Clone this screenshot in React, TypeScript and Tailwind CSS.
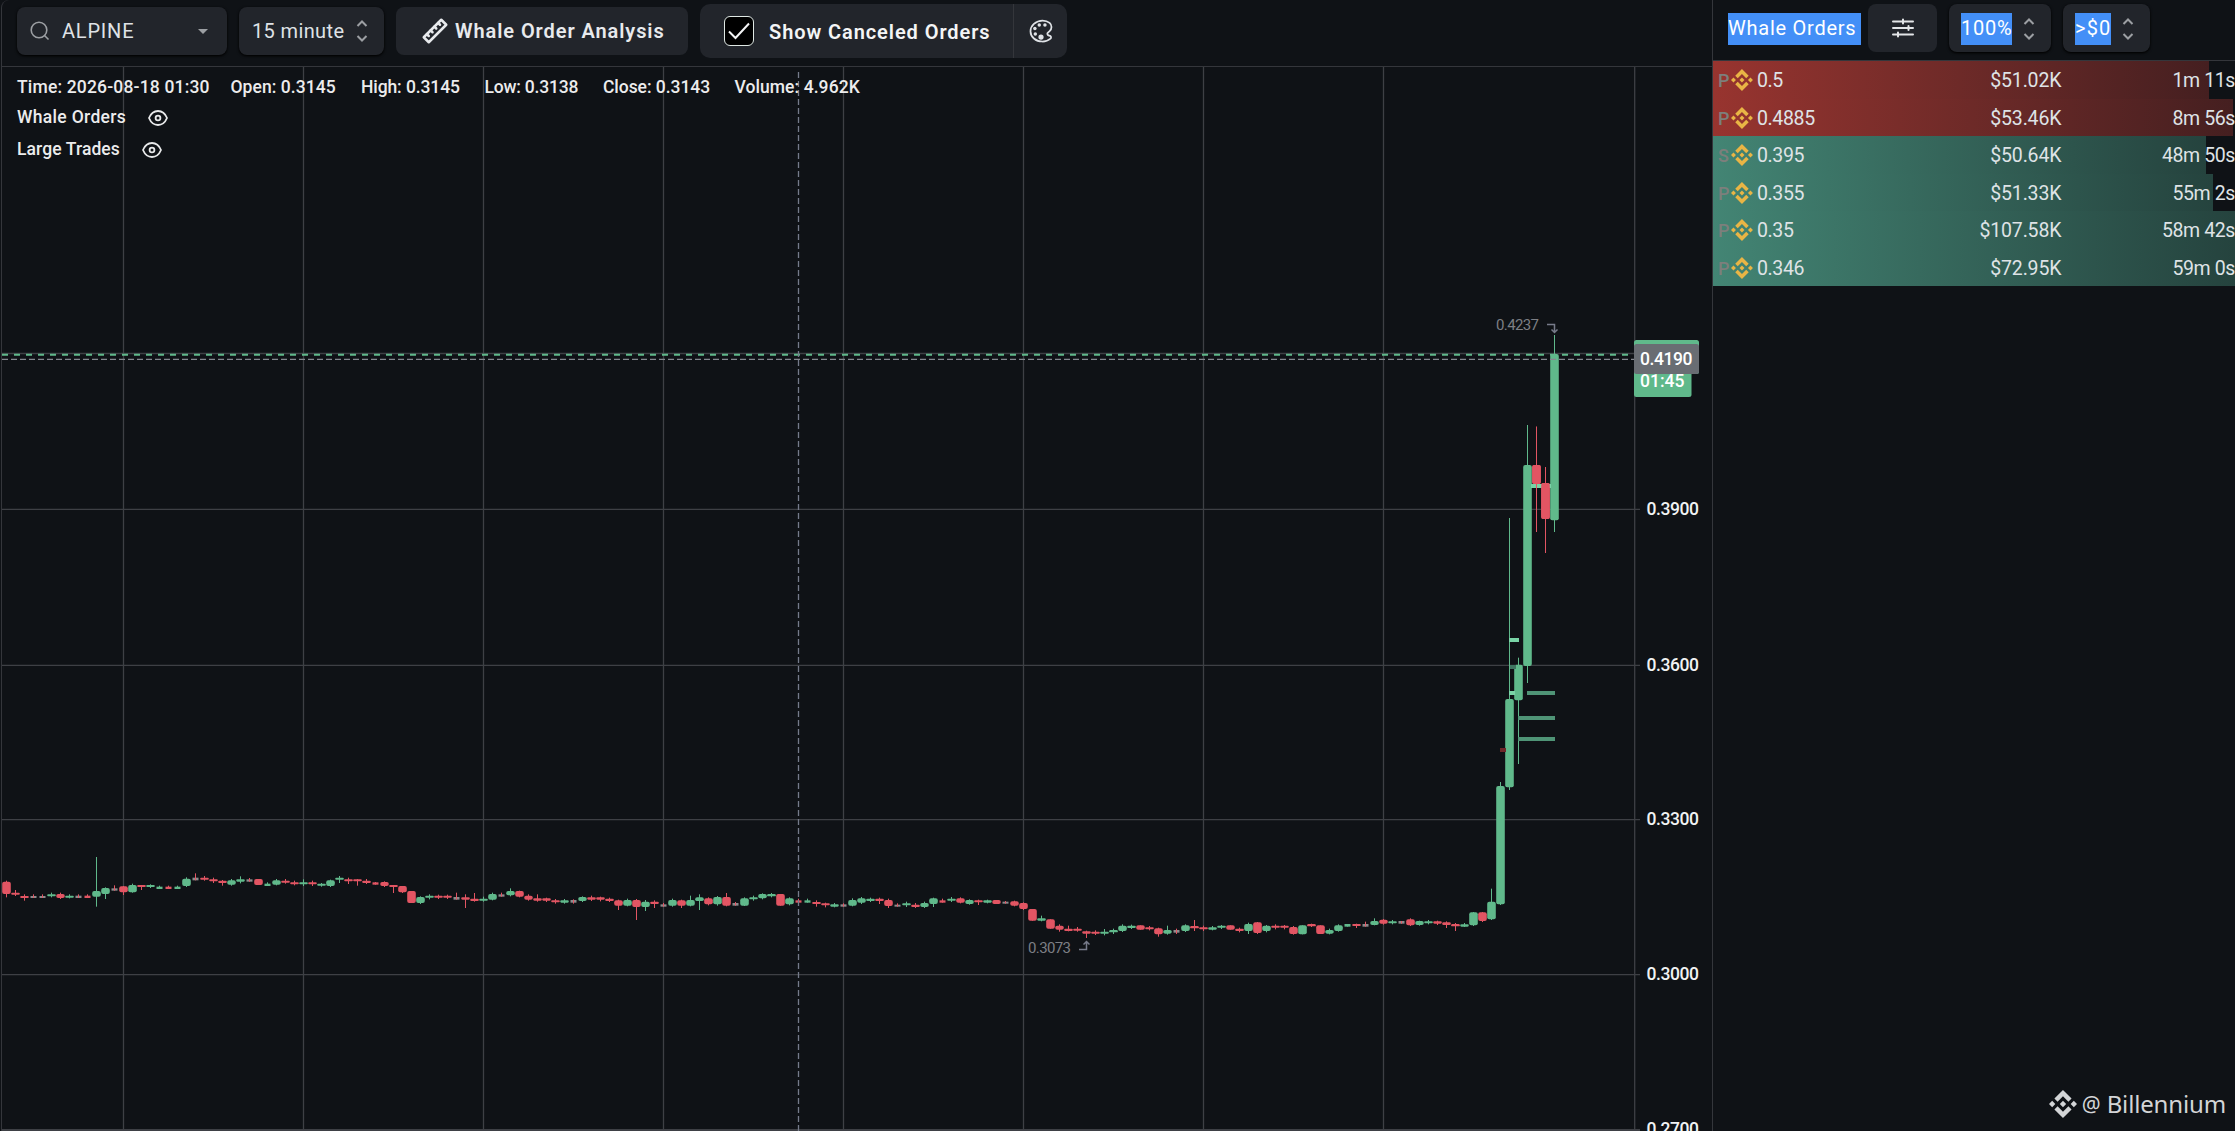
import { SiBinance } from 'react-icons/si'
import { TbRuler2 } from 'react-icons/tb'
import { IoColorPaletteOutline } from 'react-icons/io5'
import clsx from 'clsx'

type Kind = 'g' | 'r' | 'n'
// kind, body top, body bottom, wick high, wick low (thirds of a pixel below BASE_Y)
type Candle = [Kind, number, number, number, number]

const BASE_Y = 840
const STEP = 9
const GREEN = '#60b98b'
const RED = '#e25563'
const NEUTRAL = '#8b8b8d'
const GRID = '#3e4045'

const candles: Candle[] = [
  ['r', 125, 162, 122, 172], ['r', 158, 164, 150, 168], ['r', 168, 174, 163, 182], ['n', 168, 174, 163, 174],
  ['n', 168, 174, 163, 174], ['g', 163, 169, 158, 172], ['r', 162, 174, 158, 177], ['g', 167, 173, 163, 175],
  ['n', 167, 174, 163, 174], ['r', 167, 174, 163, 174], ['g', 153, 170, 51, 200], ['g', 144, 162, 142, 177],
  ['n', 145, 152, 136, 152], ['r', 139, 157, 138, 165], ['g', 135, 157, 131, 158], ['r', 135, 141, 135, 150],
  ['g', 135, 141, 133, 144], ['g', 140, 147, 137, 147], ['r', 140, 147, 137, 147], ['g', 140, 147, 137, 147],
  ['g', 116, 138, 112, 141], ['n', 113, 121, 100, 121], ['r', 113, 119, 108, 122], ['r', 118, 124, 113, 129],
  ['r', 122, 129, 120, 137], ['g', 121, 134, 117, 137], ['g', 118, 125, 109, 130], ['n', 118, 125, 114, 125],
  ['r', 117, 135, 117, 135], ['g', 131, 138, 127, 138], ['g', 121, 134, 117, 136], ['r', 122, 128, 117, 131],
  ['r', 127, 133, 122, 136], ['g', 127, 133, 118, 138], ['r', 127, 133, 122, 138], ['g', 131, 137, 129, 140],
  ['g', 121, 138, 119, 141], ['g', 113, 119, 108, 129], ['r', 118, 124, 113, 132], ['r', 118, 124, 117, 137],
  ['r', 122, 129, 117, 132], ['r', 127, 134, 126, 134], ['r', 126, 138, 124, 141], ['r', 135, 141, 135, 159],
  ['r', 138, 157, 138, 159], ['r', 153, 189, 153, 189], ['g', 171, 189, 169, 192], ['g', 167, 173, 163, 178],
  ['r', 167, 173, 164, 177], ['r', 167, 173, 164, 177], ['n', 171, 179, 158, 179], ['r', 172, 179, 163, 204],
  ['r', 176, 183, 159, 185], ['g', 176, 182, 170, 185], ['g', 162, 179, 158, 181], ['n', 163, 170, 158, 170],
  ['g', 153, 166, 145, 169], ['r', 153, 170, 152, 172], ['r', 167, 179, 163, 182], ['r', 175, 182, 163, 185],
  ['r', 175, 182, 173, 186], ['r', 181, 187, 177, 191], ['g', 181, 188, 177, 191], ['n', 180, 188, 178, 191],
  ['g', 171, 183, 169, 186], ['r', 172, 179, 167, 183], ['r', 172, 179, 170, 184], ['r', 176, 183, 173, 186],
  ['r', 181, 197, 179, 210], ['g', 180, 197, 176, 199], ['r', 180, 201, 177, 240], ['g', 185, 201, 180, 213],
  ['r', 185, 192, 181, 204], ['n', 193, 200, 189, 200], ['g', 180, 197, 176, 200], ['r', 181, 197, 179, 204],
  ['g', 180, 197, 167, 199], ['g', 172, 183, 163, 210], ['r', 175, 193, 172, 196], ['g', 171, 193, 168, 197],
  ['r', 171, 197, 159, 199], ['n', 189, 197, 186, 197], ['g', 175, 197, 172, 198], ['g', 172, 178, 167, 182],
  ['g', 162, 175, 160, 178], ['g', 162, 169, 159, 172], ['r', 162, 197, 162, 197], ['g', 175, 193, 172, 196],
  ['r', 181, 188, 176, 188], ['g', 181, 188, 176, 188], ['r', 186, 192, 181, 200], ['r', 190, 196, 188, 202],
  ['g', 193, 200, 189, 202], ['n', 193, 200, 190, 200], ['g', 180, 197, 175, 199], ['g', 175, 188, 171, 192],
  ['g', 176, 183, 173, 186], ['r', 176, 183, 173, 192], ['r', 180, 198, 176, 204], ['n', 194, 200, 190, 200],
  ['g', 190, 196, 185, 201], ['r', 194, 201, 189, 204], ['g', 189, 201, 185, 204], ['g', 175, 192, 173, 201],
  ['r', 181, 188, 176, 188], ['g', 176, 182, 171, 186], ['r', 175, 188, 172, 190], ['g', 180, 192, 178, 194],
  ['r', 181, 187, 179, 195], ['g', 181, 188, 179, 190], ['r', 180, 192, 180, 192], ['n', 185, 191, 183, 191],
  ['r', 184, 197, 182, 199], ['r', 189, 207, 187, 210], ['r', 207, 242, 207, 242], ['g', 235, 242, 227, 244],
  ['r', 238, 266, 238, 266], ['r', 257, 269, 253, 275], ['r', 266, 273, 257, 274], ['r', 266, 272, 261, 275],
  ['r', 274, 281, 272, 294], ['r', 275, 281, 271, 285], ['g', 275, 281, 267, 286], ['g', 270, 277, 266, 282],
  ['g', 257, 273, 253, 276], ['g', 257, 264, 254, 267], ['r', 256, 269, 256, 269], ['r', 262, 268, 258, 271],
  ['r', 265, 283, 263, 290], ['g', 270, 281, 257, 284], ['n', 270, 278, 266, 282], ['g', 256, 273, 253, 276],
  ['r', 258, 265, 240, 273], ['r', 262, 268, 257, 273], ['g', 262, 269, 258, 271], ['g', 257, 263, 255, 267],
  ['r', 256, 269, 256, 269], ['r', 266, 273, 263, 277], ['g', 252, 273, 248, 282], ['r', 247, 279, 246, 282],
  ['g', 257, 273, 255, 277], ['r', 257, 263, 253, 268], ['r', 257, 263, 255, 268], ['r', 261, 282, 258, 284],
  ['g', 256, 283, 256, 283], ['r', 252, 259, 251, 261], ['r', 256, 282, 256, 282], ['g', 270, 281, 266, 283],
  ['g', 256, 273, 253, 275], ['g', 252, 260, 252, 260], ['r', 252, 258, 251, 264], ['n', 252, 260, 245, 260],
  ['g', 243, 255, 235, 256], ['r', 239, 251, 237, 254], ['g', 244, 250, 240, 253], ['n', 243, 251, 243, 251],
  ['r', 238, 256, 235, 258], ['g', 243, 255, 242, 257], ['g', 244, 250, 240, 253], ['r', 244, 251, 242, 255],
  ['r', 247, 255, 244, 264], ['r', 252, 259, 249, 273], ['g', 253, 260, 249, 261], ['g', 217, 256, 216, 258],
  ['r', 217, 243, 216, 246], ['g', 185, 238, 146, 240], ['g', -162, 193, -174, 195], ['g', -423, -158, -966, -150],
  ['g', -526, -419, -547, -228], ['g', -1125, -522, -1245, -471], ['r', -1125, -1068, -1240, -924],
  ['r', -1071, -963, -1119, -861], ['g', -1458, -959, -1515, -924],
]

// resting and executed whale orders: x, y, width, colour
const levels: [number, number, number, string][] = [
  [1531, 484, 20, '#79d3a6'],
  [1509, 638, 10, '#79d3a6'],
  [1510, 665, 6, '#3f7561'],
  [1509, 691, 6, '#79d3a6'],
  [1527, 691, 28, '#4f9476'],
  [1518, 716, 37, '#4f9476'],
  [1518, 737, 37, '#4f9476'],
  [1500, 748, 6, '#6e2729'],
]

const verticals = [123.5, 303.5, 483.5, 663.5, 843.5, 1023.5, 1203.5, 1383.5]
const horizontals = [353.5, 509.3, 665.3, 819.7, 974.7]
const prices: [string, number][] = [
  ['0.3900', 514.5],
  ['0.3600', 670.5],
  ['0.3300', 825],
  ['0.3000', 980],
  ['0.2700', 1135],
]

const stats = [
  { text: 'Time: 2026-08-18 01:30', cls: 'w-[213.5px] tracking-[0.17px]' },
  { text: 'Open: 0.3145', cls: 'w-[130.5px] tracking-[0.05px]' },
  { text: 'High: 0.3145', cls: 'w-[123.5px] tracking-[-0.1px]' },
  { text: 'Low: 0.3138', cls: 'w-[118.5px] tracking-[-0.2px]' },
  { text: 'Close: 0.3143', cls: 'w-[131.5px] tracking-[-0.05px]' },
  { text: 'Volume: 4.962K', cls: 'tracking-[0.07px]' },
]

const orders = [
  { type: 'P', price: '0.5', size: '$51.02K', age: '1m 11s', side: 'sell', bar: 'w-[496px]' },
  { type: 'P', price: '0.4885', size: '$53.46K', age: '8m 56s', side: 'sell', bar: 'w-[520px]' },
  { type: 'S', price: '0.395', size: '$50.64K', age: '48m 50s', side: 'buy', bar: 'w-[493px]' },
  { type: 'P', price: '0.355', size: '$51.33K', age: '55m 2s', side: 'buy', bar: 'w-[500px]' },
  { type: 'P', price: '0.35', size: '$107.58K', age: '58m 42s', side: 'buy', bar: 'w-full' },
  { type: 'P', price: '0.346', size: '$72.95K', age: '59m 0s', side: 'buy', bar: 'w-full' },
]

function Updown() {
  return (
    <svg width="12" height="22" viewBox="0 0 12 22" fill="none" stroke="#9c9fa3" strokeWidth="2">
      <path d="M1.5 6 6 1.5 10.5 6M1.5 16 6 20.5 10.5 16" />
    </svg>
  )
}

function EyeIcon() {
  return (
    <svg width="20" height="16" viewBox="0 0 20 16" fill="none" stroke="#e8e9ea" strokeWidth="1.8">
      <path d="M1 8C3 3.2 6.3 1 10 1s7 2.2 9 7c-2 4.8-5.3 7-9 7S3 12.8 1 8Z" strokeLinejoin="round" />
      <circle cx="10" cy="8" r="2.4" />
    </svg>
  )
}

function CandleShape({ candle, index }: { candle: Candle; index: number }) {
  const [kind, top, bottom, high, low] = candle
  const x = 6.5 + index * STEP
  const y = BASE_Y + top / 3
  const h = (bottom - top) / 3
  const color = kind === 'g' ? GREEN : kind === 'r' ? RED : NEUTRAL
  const doji = kind === 'n' || (h < 3 && bottom === low)
  return (
    <g>
      <rect x={x - (doji ? 3 : 4.3)} y={y} width={doji ? 6 : 8.6} height={h} rx={doji ? 0 : Math.min(2, h / 2)} fill={color} />
      <rect x={x - 0.5} y={BASE_Y + high / 3} width={1} height={(low - high) / 3} fill={kind === 'n' ? RED : color} />
    </g>
  )
}

function Chart() {
  return (
    <svg className="block" width="1710" height="1064" viewBox="2 67 1710 1064" fontFamily="Roboto, sans-serif">
      <g stroke={GRID} strokeWidth="1.3">
        {verticals.map((x) => <path key={x} d={`M${x} 67V1129`} />)}
        {horizontals.map((y) => <path key={y} d={`M2 ${y}H1640`} />)}
        <path d="M1634.7 67V1131" />
        <path d="M2 1130H1640" strokeWidth="2" />
      </g>
      {candles.map((c, i) => <CandleShape key={i} candle={c} index={i} />)}
      {levels.map(([x, y, w, fill]) => <rect key={`${x}-${y}`} x={x} y={y} width={w} height="4" fill={fill} />)}
      {/* the two pullback candles sit over the 0.395 level */}
      <CandleShape candle={candles[170]} index={170} />
      <CandleShape candle={candles[171]} index={171} />

      <path d="M2 354.8H1634" stroke={GREEN} strokeWidth="2" strokeDasharray="6 6" />
      <path d="M2 359.4H1634" stroke="#85888f" strokeWidth="1.3" strokeDasharray="6 3" />
      <path d="M798.5 72V1131" stroke="#757b8b" strokeWidth="1.3" strokeDasharray="6 3" />

      {/* high and low of the visible range */}
      <g fill="#7d7f84" fontSize="15">
        <text x="1496" y="329.5" textLength="43">0.4237</text>
        <text x="1028" y="953" textLength="43">0.3073</text>
      </g>
      <g fill="none" stroke="#777b8a" strokeWidth="1.5">
        <path d="M1547 324.500H1554.5V332M1551.5 329.5 1554.5 332.5 1557.5 329.5" />
        <path d="M1079 949.500H1086.5V942M1083.5 944.5 1086.5 941.5 1089.5 944.5" />
      </g>

      <g fill="#f1f2f3" fontSize="17.5" fontWeight="500">
        {prices.map(([label, y]) => <text key={label} x="1646.5" y={y} textLength="52.5">{label}</text>)}
      </g>
      <rect x="1634" y="340" width="65" height="34" rx="2.5" fill={GREEN} />
      <rect x="1634" y="360" width="57.5" height="37" rx="2.5" fill={GREEN} />
      <text x="1640" y="387" fontSize="17.5" fontWeight="500" fill="#fff" textLength="44.5">01:45</text>
      <rect x="1634" y="344" width="65" height="30" rx="2.5" fill="#696d73" />
      <text x="1640" y="364.7" fontSize="17.5" fontWeight="500" fill="#fff" textLength="52.5">0.4190</text>
    </svg>
  )
}

function Toolbar() {
  return (
    <header className="flex h-[67px] items-start gap-3 border-b border-[#34363b] pl-[15px] text-[20px] text-[#dfe2e6]">
      <div className="mt-[7px] flex h-12 w-[210px] items-center rounded-lg bg-[#22252b] pl-[13px] pr-[19px] shadow-sm shadow-black">
        <svg width="20" height="20" viewBox="0 0 20 20" fill="none" stroke="#9c9fa3" strokeWidth="1.6">
          <circle cx="9" cy="9" r="7.8" />
          <path d="m14.5 14.5 4 4" />
        </svg>
        <span className="ml-3 tracking-[0.8px]">ALPINE</span>
        <svg className="ml-auto" width="10" height="5" viewBox="0 0 10 5" fill="#9c9fa3"><path d="M0 0h10L5 5z" /></svg>
      </div>
      <div className="mt-[7px] flex h-12 w-[145px] items-center justify-between rounded-lg bg-[#22252b] pl-[13px] pr-[16px] shadow-sm shadow-black">
        <span className="tracking-[0.37px]">15 minute</span>
        <Updown />
      </div>
      <button className="mt-[7px] flex h-12 w-[292px] items-center rounded-lg bg-[#22252b] pl-6 font-semibold text-[#e8eaed]">
        <TbRuler2 size={30} />
        <span className="ml-[5px] whitespace-nowrap tracking-[0.92px]">Whale Order Analysis</span>
      </button>
      <div className="mt-1 flex h-[54px] w-[367px] items-center rounded-[10px] bg-[#22252b] font-semibold text-[#f4f5f6]">
        <span className="ml-6 flex size-[30px] items-center justify-center rounded-md border border-[#dfe8e4] bg-black">
          <svg width="22" height="18" viewBox="0 0 22 18" fill="none" stroke="#f4f5f6" strokeWidth="2"><path d="m1 9.5 6.5 6.5L21 1.5" /></svg>
        </span>
        <span className="ml-[15px] mt-0.5 whitespace-nowrap tracking-[0.92px]">Show Canceled Orders</span>
        <span className="ml-auto flex h-full w-[54px] items-center justify-center border-l border-[#34363b] pl-px text-[#dfe2e6]">
          <IoColorPaletteOutline size={28} />
        </span>
      </div>
    </header>
  )
}

function Legend() {
  return (
    <div className="absolute left-[15px] top-[10px] text-[17.5px] leading-[21px] font-medium text-[#ececed]">
      <div className="flex whitespace-nowrap">
        {stats.map(({ text, cls }) => <span key={text} className={cls}>{text}</span>)}
      </div>
      <div className="mt-[9px] flex items-center tracking-[0.32px]">
        <span className="w-[131px]">Whale Orders</span>
        <EyeIcon />
      </div>
      <div className="mt-[11px] flex items-center tracking-[0.1px]">
        <span className="w-[125px]">Large Trades</span>
        <EyeIcon />
      </div>
    </div>
  )
}

function OrdersPanel() {
  return (
    <aside className="w-[523px] overflow-hidden border-l border-[#34363b]">
      <div className="flex h-[61px] border-b border-[#34363b] pl-[15px] pt-1 text-[20px] text-white">
        <span className="mt-[9px] h-8 w-[133px] bg-[#438ff7] leading-[31px] tracking-[0.75px]">Whale Orders</span>
        <button className="ml-[7px] flex h-12 w-[69px] items-center justify-center rounded-lg bg-[#22252b]">
          <svg width="22" height="20" viewBox="0 0 22 20" fill="none" stroke="#e3e5e8" strokeWidth="2" strokeLinecap="round">
            <path d="M1 3.500h20M1 10h20M1 16.500h20M11 1.500v4M16.500 8v4M6 14.500v4" />
          </svg>
        </button>
        <div className="ml-3 flex h-12 w-[102px] items-center rounded-lg bg-[#22252b] pl-3 shadow-sm shadow-black">
          <span className="mt-0.5 h-8 w-[51px] bg-[#438ff7] leading-[31px] tracking-[0.8px]">100%</span>
          <span className="ml-[11px] mt-0.5"><Updown /></span>
        </div>
        <div className="ml-3 flex h-12 w-[87px] items-center rounded-lg bg-[#22252b] pl-3 shadow-sm shadow-black">
          <span className="mt-0.5 h-8 w-9 bg-[#438ff7] leading-[31px] tracking-[1.2px]">&gt;$0</span>
          <span className="ml-[11px] mt-0.5"><Updown /></span>
        </div>
      </div>
      {orders.map((o) => (
        <div key={o.price} className="relative h-[37.5px] text-[19.5px] whitespace-nowrap text-[#dfe3e6]">
          <div
            className={clsx(
              'h-full bg-linear-to-r',
              o.bar,
              o.side === 'sell' ? 'from-[#98342f] to-[#451f20]' : 'from-[#438574] to-[#25433e]'
            )}
          />
          <div className="absolute inset-0 flex items-center pt-[2px]">
            <span className="ml-[5px] w-[13px] text-[18px] font-medium text-[#7d7f7c]">{o.type}</span>
            <SiBinance size={22} className="-mt-px text-[#e9b545]" />
            <span className="ml-1 w-[120px] tracking-[-0.35px]">{o.price}</span>
            <span className="w-[185px] text-right tracking-[-0.15px]">{o.size}</span>
            <span className="w-[174px] text-right tracking-[-0.4px]">{o.age}</span>
          </div>
        </div>
      ))}
    </aside>
  )
}

export default function App() {
  return (
    <div className="relative flex h-[1131px] w-[2235px] overflow-hidden bg-[#0f1216] font-['Roboto',sans-serif]">
      <main className="ml-px w-[1711px] shrink-0 rounded-tl-lg border-l border-[#34363b]">
        <Toolbar />
        <div className="relative">
          <Chart />
          <Legend />
        </div>
      </main>
      <OrdersPanel />
      <div className="absolute bottom-[9px] right-[9px] flex items-center font-['Noto_Sans',sans-serif] text-[24px] leading-9 text-[#d3d5d7]">
        <SiBinance size={28} />
        <span className="ml-[5px] text-[21px]">@</span>
        <span className="ml-[6px] tracking-[-0.15px]">Billennium</span>
      </div>
    </div>
  )
}
